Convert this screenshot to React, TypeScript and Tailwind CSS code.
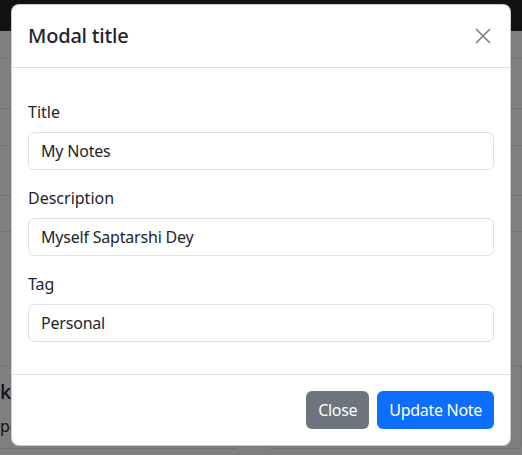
import React from 'react'

const font = { fontFamily: '"Noto Sans", "Open Sans", sans-serif' }

function Field({ label, value }: { label: string; value: string }) {
  return (
    <div className="mb-4">
      <label className="mb-2 block text-base leading-6 text-[#212529]">{label}</label>
      <input
        className="block h-[38px] w-full rounded-[6px] border border-[#dee2e6] bg-white px-3 text-base tracking-[-0.2px] text-[#212529] outline-none"
        defaultValue={value}
      />
    </div>
  )
}

export default function App() {
  return (
    <div className="relative h-[455px] w-[522px] overflow-hidden bg-white" style={font}>
      {/* page behind the modal */}
      <div className="h-[31px] bg-[#212529]"></div>
      <div className="h-[28px] border-b border-[#dee2e6]"></div>
      <div className="h-[50px] border-b border-[#dee2e6]"></div>
      <div className="h-[37px] border-b border-[#dee2e6]"></div>
      <div className="h-[50px] border-b border-[#dee2e6]"></div>
      <div className="h-[36px] border-b border-[#dee2e6]"></div>
      <div className="h-[133px]"></div>
      <div className="-ml-[17px] flex gap-[26px]">
        <div className="h-[84px] w-[258px] rounded-b-[6px] border border-[#dee2e6] px-4 pt-[14px]">
          <div className="text-xl font-medium leading-6 text-[#212529]">klkl</div>
          <div className="mt-[10px] text-base text-[#212529]">pops</div>
        </div>
        <div className="h-[84px] w-[258px] rounded-b-[6px] border border-[#dee2e6]"></div>
      </div>

      {/* modal */}
      <div className="absolute inset-0 bg-black/50">
        <div className="mx-auto mt-[4px] w-[500px] rounded-[8px] border border-black/20 bg-white">
          <div className="flex items-center justify-between border-b border-[#dee2e6] px-4 py-4">
            <h1 className="text-xl font-medium leading-[30px] tracking-[-0.2px] text-[#212529]">Modal title</h1>
            <button className="mr-[-1px] flex h-6 w-6 items-center justify-center opacity-50">
              <svg width="16" height="16" viewBox="0 0 16 16">
                <path d="M1 1 L15 15 M15 1 L1 15" stroke="#000" strokeWidth="1.6" />
              </svg>
            </button>
          </div>
          <div className="p-4">
            <form className="my-4">
              <Field label="Title" value="My Notes" />
              <Field label="Description" value="Myself Saptarshi Dey" />
              <Field label="Tag" value="Personal" />
            </form>
          </div>
          <div className="flex justify-end gap-2 border-t border-[#dee2e6] px-4 py-4">
            <button className="h-[38px] rounded-[6px] bg-[#6c757d] px-3 text-base tracking-[-0.3px] text-white">Close</button>
            <button className="h-[38px] rounded-[6px] bg-[#0d6efd] px-3 text-base tracking-[-0.3px] text-white">Update Note</button>
          </div>
        </div>
      </div>
    </div>
  )
}
